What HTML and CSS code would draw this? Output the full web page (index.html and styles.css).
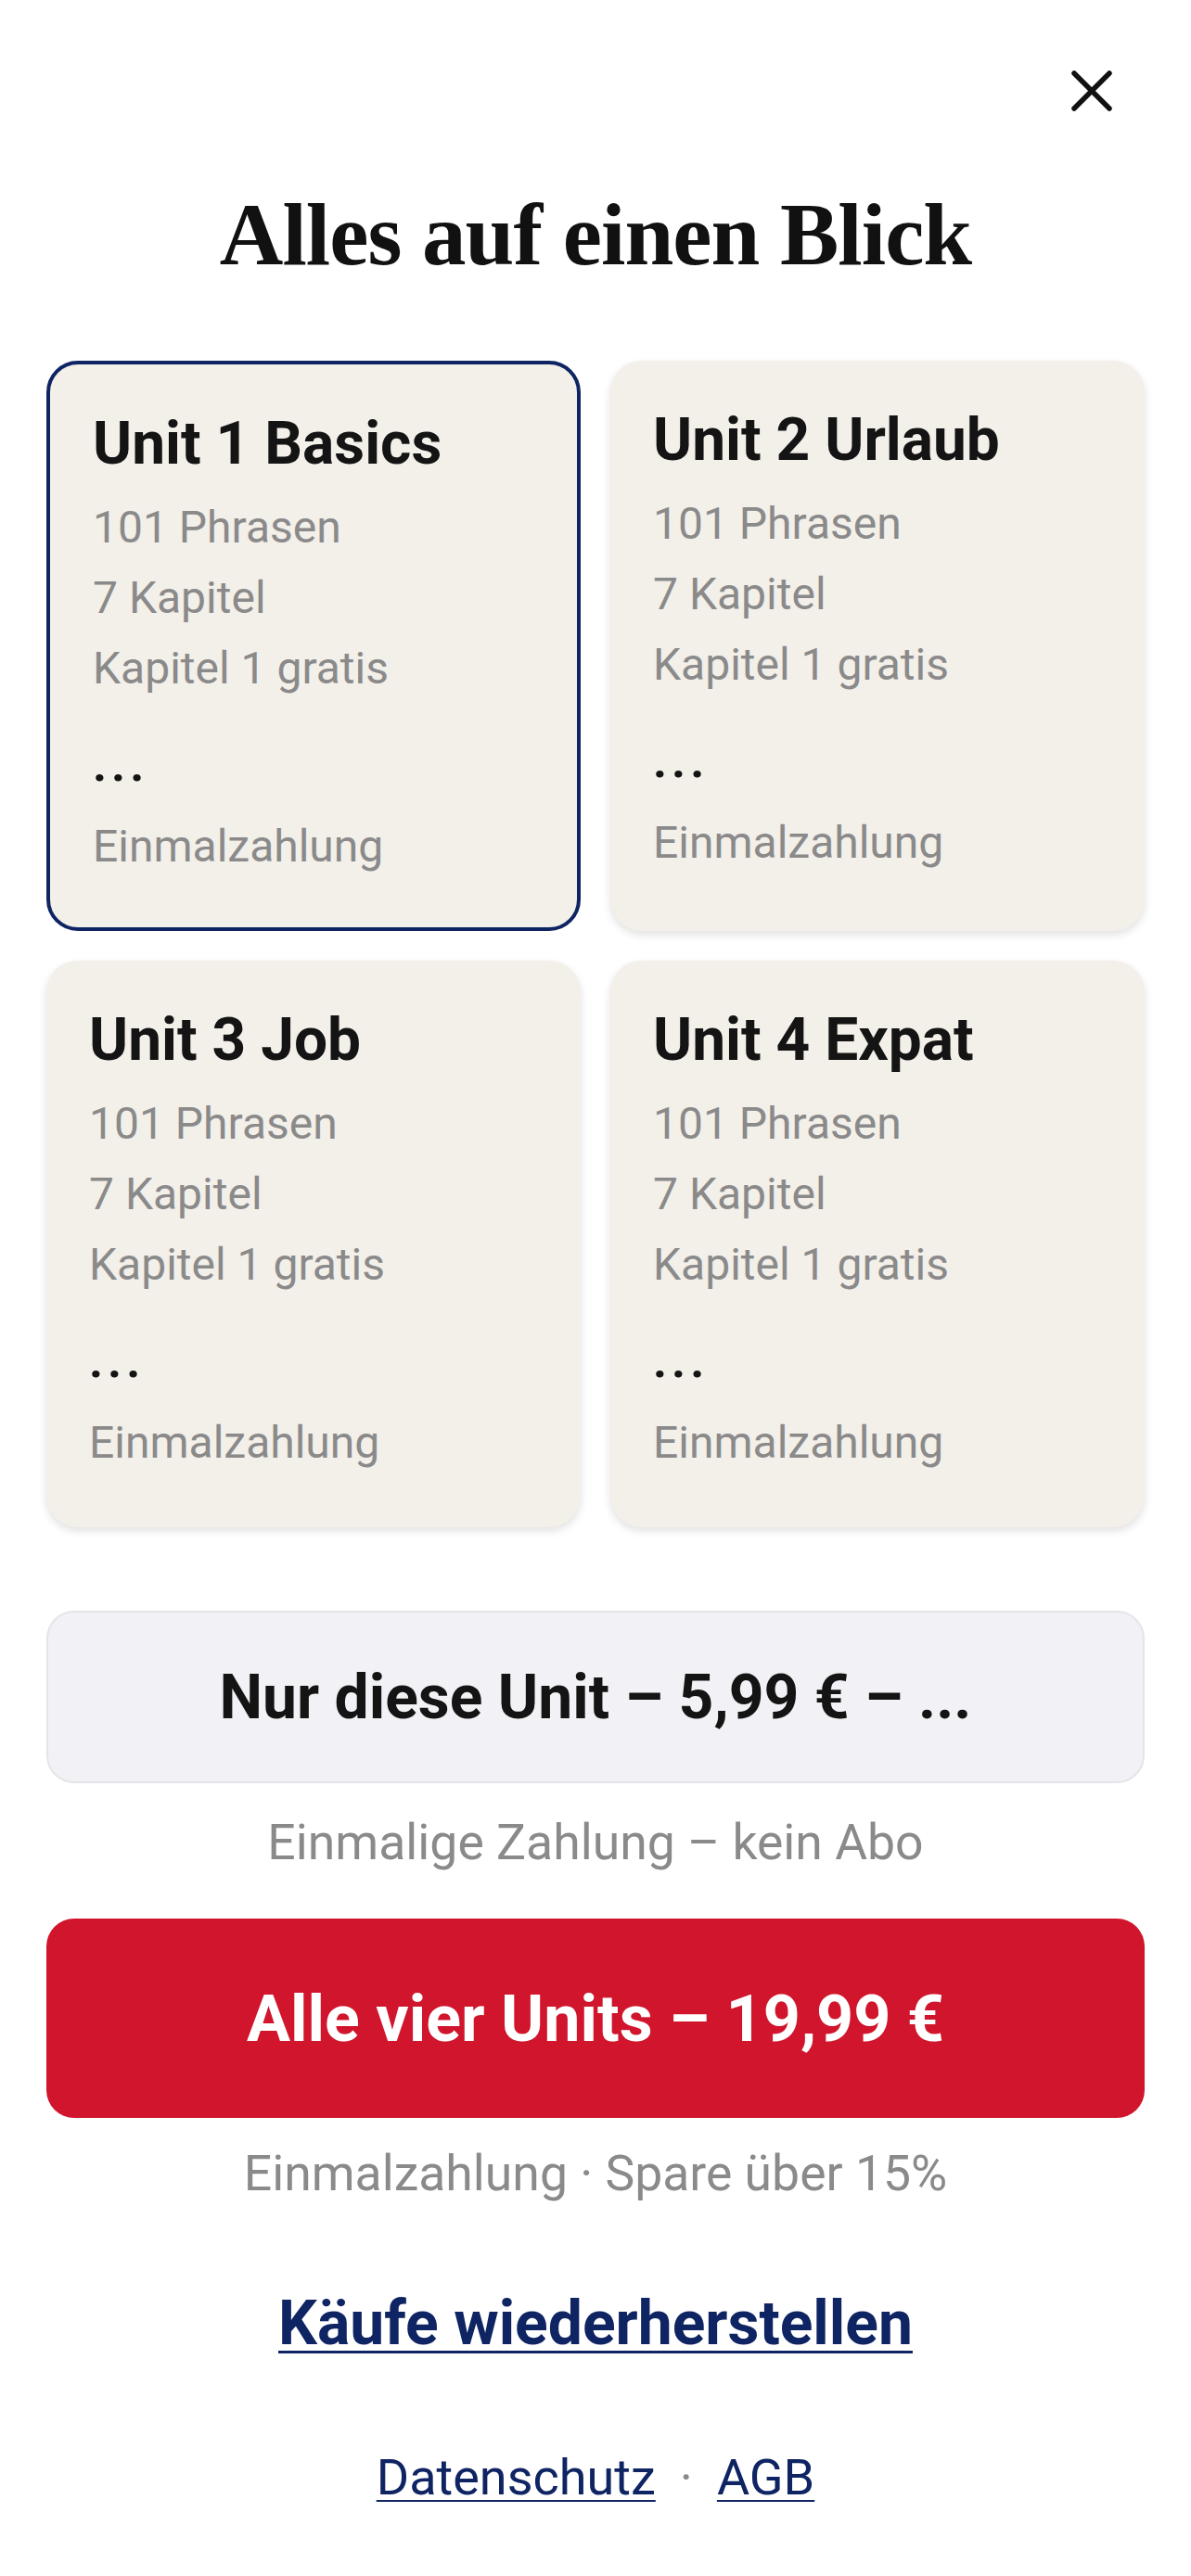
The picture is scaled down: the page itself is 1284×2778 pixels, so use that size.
FILE: index.html
```html
<!DOCTYPE html>
<html lang="de">
<head>
    <meta charset="UTF-8">
    <meta name="viewport" content="width=device-width, initial-scale=1.0">
    <title>Alles auf einen Blick</title>
    <link rel="stylesheet" href="styles.css">
</head>
<body>
    <div class="topbar">
        <button class="close-btn" aria-label="Schließen">
            <svg viewBox="0 0 50 50" width="50" height="50">
                <path d="M6 6 L44 44 M44 6 L6 44" stroke="#111" stroke-width="5.5" stroke-linecap="round" fill="none"/>
            </svg>
        </button>
    </div>

    <h1 class="page-title">Alles auf einen Blick</h1>

    <div class="container">
        <div class="units-grid">
            <div class="unit-card selected">
                <div class="unit-name">Unit 1 Basics</div>
                <ul class="unit-facts">
                    <li>101 Phrasen</li>
                    <li>7 Kapitel</li>
                    <li>Kapitel 1 gratis</li>
                </ul>
                <div class="unit-more">...</div>
                <div class="unit-pay">Einmalzahlung</div>
            </div>
            <div class="unit-card">
                <div class="unit-name">Unit 2 Urlaub</div>
                <ul class="unit-facts">
                    <li>101 Phrasen</li>
                    <li>7 Kapitel</li>
                    <li>Kapitel 1 gratis</li>
                </ul>
                <div class="unit-more">...</div>
                <div class="unit-pay">Einmalzahlung</div>
            </div>
            <div class="unit-card">
                <div class="unit-name">Unit 3 Job</div>
                <ul class="unit-facts">
                    <li>101 Phrasen</li>
                    <li>7 Kapitel</li>
                    <li>Kapitel 1 gratis</li>
                </ul>
                <div class="unit-more">...</div>
                <div class="unit-pay">Einmalzahlung</div>
            </div>
            <div class="unit-card">
                <div class="unit-name">Unit 4 Expat</div>
                <ul class="unit-facts">
                    <li>101 Phrasen</li>
                    <li>7 Kapitel</li>
                    <li>Kapitel 1 gratis</li>
                </ul>
                <div class="unit-more">...</div>
                <div class="unit-pay">Einmalzahlung</div>
            </div>
        </div>

        <button class="btn btn-single">Nur diese Unit – 5,99 € – ...</button>
        <p class="btn-note note-single">Einmalige Zahlung – kein Abo</p>

        <button class="btn btn-all">Alle vier Units – 19,99 €</button>
        <p class="btn-note note-all">Einmalzahlung · Spare über 15%</p>

        <a class="restore-link" href="#">Käufe wiederherstellen</a>

        <div class="legal-links">
            <a href="#">Datenschutz</a>
            <span class="sep">·</span>
            <a href="#">AGB</a>
        </div>
    </div>
</body>
</html>
```

FILE: styles.css
```css
:root {
    --navy: #0f2463;
    --red: #d0152c;
    --card-bg: #f3efe9;
    --text: #141414;
    --muted: #8a8a8a;
}

* {
    margin: 0;
    padding: 0;
    box-sizing: border-box;
}

body {
    background: #ffffff;
    color: var(--text);
    font-family: Roboto, "Noto Sans", sans-serif;
}

.topbar {
    display: flex;
    justify-content: flex-end;
    padding: 73px 82px 0 0;
}

.close-btn {
    display: flex;
    width: 50px;
    height: 50px;
    border: none;
    background: none;
    cursor: pointer;
}

.page-title {
    margin-top: 75px;
    text-align: center;
    font-family: "Liberation Serif", "DejaVu Serif", serif;
    font-weight: bold;
    font-size: 95px;
    line-height: 110px;
    letter-spacing: -1px;
    color: #111;
}

.container {
    padding: 0 50px;
}

.units-grid {
    display: grid;
    grid-template-columns: 1fr 1fr;
    gap: 32px;
    margin-top: 81px;
}

.unit-card {
    background: var(--card-bg);
    border-radius: 34px;
    padding: 50px 46px 53px;
    box-shadow: 0 4px 10px rgba(0, 0, 0, 0.12);
}

.unit-card.selected {
    border: 4px solid var(--navy);
    padding: 50px 46px 49px;
    box-shadow: none;
}

.unit-name {
    font-size: 64px;
    line-height: 72px;
    font-weight: 700;
    color: var(--text);
}

.unit-facts {
    list-style: none;
    margin-top: 16px;
}

.unit-facts li,
.unit-pay {
    font-size: 48px;
    line-height: 76px;
    color: var(--muted);
}

.unit-more {
    margin-top: 28px;
    font-size: 52px;
    line-height: 76px;
    font-weight: 700;
    letter-spacing: 5px;
    color: var(--text);
}

.unit-pay {
    margin-top: 12px;
}

.btn {
    display: flex;
    align-items: center;
    justify-content: center;
    width: 100%;
    border-radius: 30px;
    font-family: Roboto, "Noto Sans", sans-serif;
    font-weight: 700;
    cursor: pointer;
}

.btn-single {
    margin-top: 90px;
    height: 186px;
    background: #f2f2f6;
    border: 2px solid #e4e4e9;
    color: var(--text);
    font-size: 66px;
}

.btn-all {
    margin-top: 51px;
    height: 215px;
    background: var(--red);
    border: none;
    color: #fff;
    font-size: 70px;
}

.btn-note {
    text-align: center;
    font-size: 53.5px;
    line-height: 62px;
    color: var(--muted);
}

.note-single {
    margin-top: 33px;
}

.note-all {
    margin-top: 29px;
}

.restore-link {
    display: block;
    width: max-content;
    margin: 93px auto 0;
    font-size: 66px;
    line-height: 76px;
    font-weight: 700;
    color: var(--navy);
    text-decoration: underline;
    text-decoration-thickness: 3px;
    text-underline-offset: 7px;
}

.legal-links {
    display: flex;
    justify-content: center;
    align-items: baseline;
    gap: 26px;
    margin-top: 97px;
    font-size: 54px;
    line-height: 62px;
}

.legal-links a {
    color: var(--navy);
    text-decoration: underline;
    text-decoration-thickness: 2px;
    text-underline-offset: 6px;
}

.legal-links .sep {
    color: var(--muted);
}
```
